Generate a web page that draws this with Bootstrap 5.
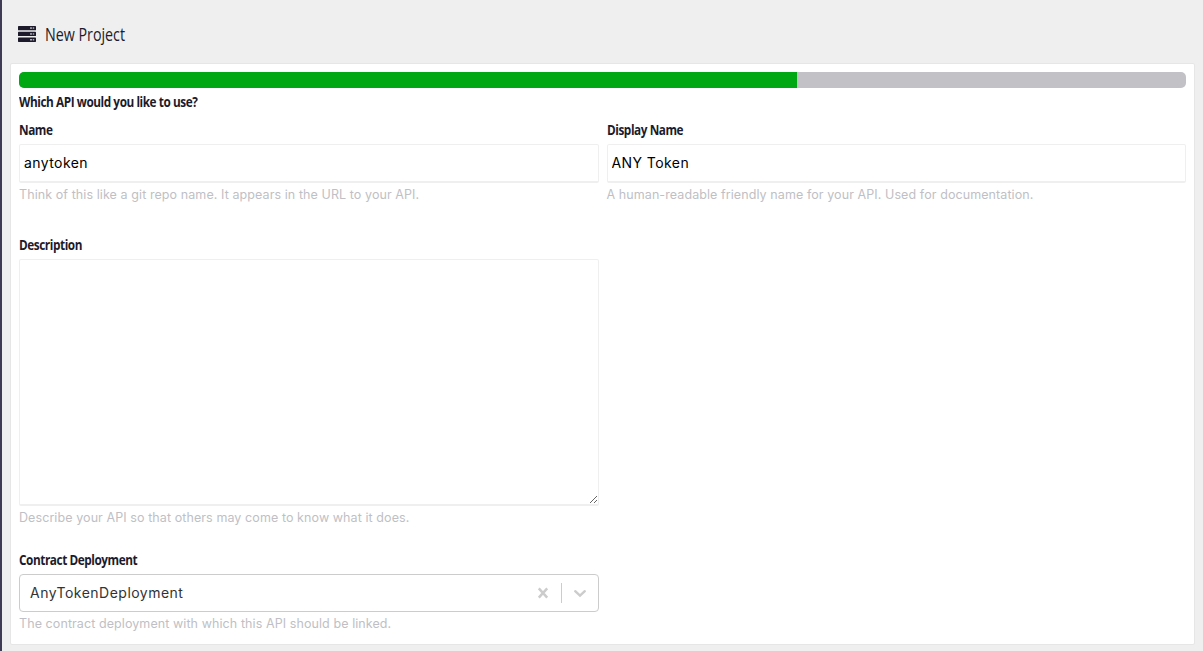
<!DOCTYPE html>
<html lang="en">
<head>
<meta charset="utf-8">
<meta name="viewport" content="width=device-width, initial-scale=1">
<title>New Project</title>
<link href="https://cdn.jsdelivr.net/npm/bootstrap@5.3.0/dist/css/bootstrap.min.css" rel="stylesheet">
<style>
body{background:#efefef;color:#1d1b2b;font-family:Inter,"Liberation Sans",sans-serif;border-left:2px solid #3f3b55;overflow:hidden}
.page-head{height:63px;padding:5px 0 0 16px}
.page-title{font:400 17.5px/24px "Open Sans",sans-serif;transform:scaleX(.815);transform-origin:left;white-space:nowrap;margin:0 0 0 1px}
.panel{margin:0 8px;border:1px solid #e6e6e6;border-radius:2px}
.progress{height:16px;border-radius:5px;background:#c2c1c6}
.progress-bar{background:#00a814}
.step-title,.form-label{font:700 13.5px/28px "Open Sans",sans-serif;height:28px;letter-spacing:-.5px;margin:0;display:block;transform:scaleX(.873);transform-origin:left}
.form-control{border:1px solid #efefef;border-bottom-width:2px;border-radius:2px;padding:0 4px 1px;font-size:14px;color:#000;height:39px;letter-spacing:.42px}
textarea.form-control{height:247px;resize:vertical}
.form-text{font-size:12.5px;line-height:24px;height:24px;margin:0;color:#c0bfc5;white-space:nowrap;letter-spacing:.085px}
.picker{height:38px;border:1px solid #ccc;border-radius:4px;padding-left:10px;font-size:14px;color:#333;letter-spacing:.48px}
.picker-value{padding-bottom:2px}
.picker-rule{width:1px;height:20px;background:#ccc}
.second{margin-top:24px}.third{margin-top:16px}
</style>
</head>
<body class="min-vh-100">
<header class="page-head d-flex align-items-center">
<svg class="me-2" width="18" height="16" viewBox="0 0 18 16"><g fill="#1d1b2b"><rect width="18" height="4.3" rx=".6"/><rect y="5.8" width="18" height="4.3" rx=".6"/><rect y="11.6" width="18" height="4.3" rx=".6"/></g><g fill="#aaa9b2"><rect x="12" y="1.3" width="2" height="1.5"/><rect x="14.7" y="1.3" width="1.5" height="1.5"/><rect x="12" y="7.2" width="2" height="1.5"/><rect x="14.7" y="7.2" width="1.5" height="1.5"/><rect x="12" y="13" width="2" height="1.5"/><rect x="14.7" y="13" width="1.5" height="1.5"/></g></svg>
<h1 class="page-title">New Project</h1>
</header>
<main class="panel bg-white p-2">
<div class="progress"><div class="progress-bar" style="width:66.667%"></div></div>
<h2 class="step-title">Which API would you like to use?</h2>
<form>
<div class="row gx-2">
<div class="col-6"><label class="form-label" for="name">Name</label><input class="form-control" id="name" value="anytoken"><div class="form-text">Think of this like a git repo name. It appears in the URL to your API.</div></div>
<div class="col-6"><label class="form-label" for="display">Display Name</label><input class="form-control" id="display" value="ANY Token"><div class="form-text">A human-readable friendly name for your API. Used for documentation.</div></div>
</div>
<div class="row gx-2 second"><div class="col-6"><label class="form-label" for="desc">Description</label><textarea class="form-control d-block" id="desc"></textarea><div class="form-text">Describe your API so that others may come to know what it does.</div></div></div>
<div class="row gx-2 third"><div class="col-6"><span class="form-label">Contract Deployment</span>
<div class="picker d-flex align-items-center"><span class="picker-value flex-grow-1">AnyTokenDeployment</span>
<svg width="36" height="20" viewBox="0 0 36 20"><path d="M13.8 5.4l8.4 9.2m0-9.2l-8.4 9.2" stroke="#ccc" stroke-width="2.5"/></svg>
<span class="picker-rule"></span>
<svg width="36" height="20" viewBox="0 0 36 20"><path d="M13.2 8.2l4.8 4.4 4.8-4.4" fill="none" stroke="#ccc" stroke-width="2.4" stroke-linecap="round"/></svg></div>
<div class="form-text">The contract deployment with which this API should be linked.</div></div></div>
</form>
</main>
<script src="https://cdn.jsdelivr.net/npm/bootstrap@5.3.0/dist/js/bootstrap.bundle.min.js"></script>
</body>
</html>
